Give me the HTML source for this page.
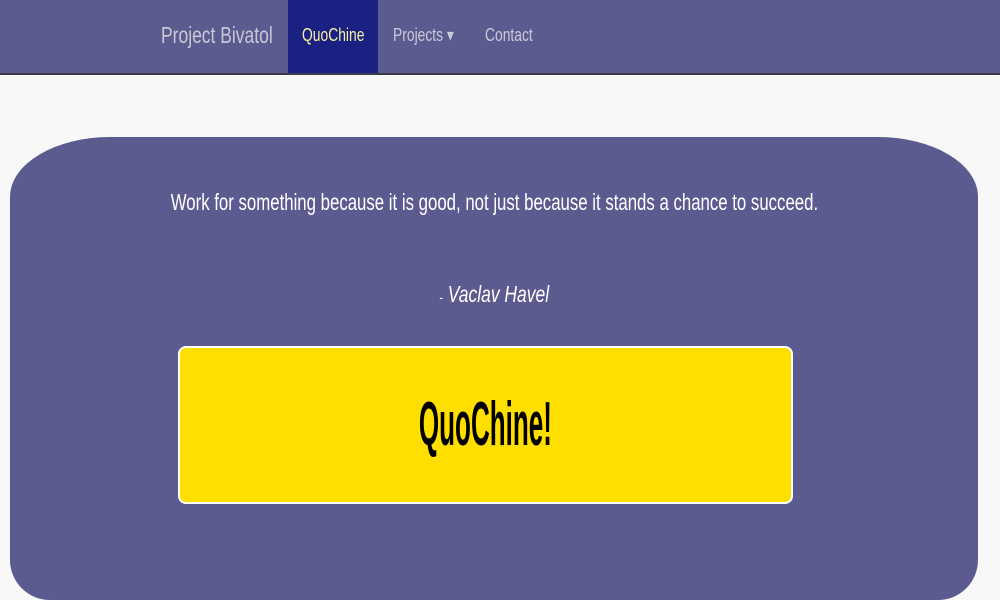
<!DOCTYPE html>
<html style="overflow:hidden;height:600px"><head><style>
body{margin:0;width:1000px;height:600px;overflow:hidden;background:#f8f8f8;font-family:"Liberation Sans",sans-serif;position:relative}
.nav{position:absolute;left:0;top:0;width:1000px;height:73px;background:#5b5b90;border-bottom:2px solid #3a3a4a}
.nav span{position:absolute;top:24px;font-size:19px;color:#c9c9d9;display:inline-block;transform:scaleX(.77);transform-origin:left;white-space:nowrap}
.active{position:absolute;left:288px;top:0;width:90px;height:73px;background:#1a2183}
.box{position:absolute;left:10px;top:137px;width:968px;height:463px;background:#5b5b90;border-radius:100px 100px 40px 40px/60px 60px 40px 40px}
.q{position:absolute;left:0;width:1000px;text-align:center;color:#fff;white-space:nowrap}
.btn{position:absolute;left:178px;top:346px;width:615px;height:158px;background:#ffdf00;border:2px solid #fff;border-radius:8px;box-sizing:border-box;text-align:center;line-height:154px;font-size:62px;font-weight:bold}
.btn span{display:inline-block;transform:scaleX(.42)}
</style></head><body>
<div class="nav">
<div class="active"></div>
<span style="left:161px;font-size:23px;top:22px;color:#c8c8d6;transform:scaleX(.76)">Project Bivatol</span>
<span style="left:302px;color:#f5f0a0;font-size:18px;top:25px">QuoChine</span>
<span style="left:393px;font-size:18px;top:25px">Projects ▾</span>
<span style="left:485px;font-size:18px;top:25px">Contact</span>
</div>
<div class="box"></div>
<div class="q" style="top:189px;font-size:23px;left:-6px"><span style="display:inline-block;transform:scaleX(.73)">Work for something because it is good, not just because it stands a chance to succeed.</span></div>
<div class="q" style="top:281px;font-size:23px;left:-6px"><span style="display:inline-block;transform:scaleX(.76)"><span style="font-size:14px">-</span> <i>Vaclav Havel</i></span></div>
<div class="btn"><span>QuoChine!</span></div>
</body></html>
